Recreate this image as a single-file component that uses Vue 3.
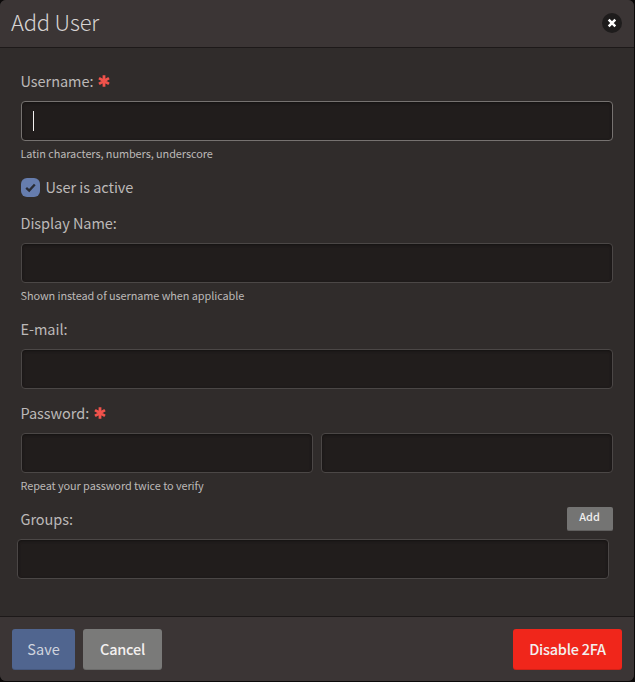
<script setup>
import { ref } from 'vue'

const active = ref(true)
</script>

<template>
  <div class="modal">
    <header class="header">
      <h1>Add User</h1>
      <button class="close" aria-label="Close">
        <svg viewBox="0 0 20 20"><path d="M6.7 6.7 13.3 13.3M13.3 6.7 6.7 13.3" /></svg>
      </button>
    </header>

    <main class="body">
      <div class="label first">
        <span>Username:</span>
        <svg class="star" viewBox="0 0 12 12"><path d="M6 .3V11.7M1 3.1 11 8.9M11 3.1 1 8.9" /></svg>
      </div>
      <div class="input focused"><i class="caret"></i></div>
      <div class="hint">Latin characters, numbers, underscore</div>

      <div class="check" @click="active = !active">
        <span class="box">
          <svg v-if="active" viewBox="0 0 19 19"><path d="M5.2 9.8 8.2 12.6 13.8 6.4" /></svg>
        </span>
        <span>User is active</span>
      </div>

      <div class="label display"><span>Display Name:</span></div>
      <div class="input"></div>
      <div class="hint">Shown instead of username when applicable</div>

      <div class="label email"><span>E-mail:</span></div>
      <div class="input"></div>

      <div class="label password">
        <span>Password:</span>
        <svg class="star" viewBox="0 0 12 12"><path d="M6 .3V11.7M1 3.1 11 8.9M11 3.1 1 8.9" /></svg>
      </div>
      <div class="pair">
        <div class="input"></div>
        <div class="input"></div>
      </div>
      <div class="hint">Repeat your password twice to verify</div>

      <div class="label groups">
        <span>Groups:</span>
        <button class="add">Add</button>
      </div>
      <div class="input shifted"></div>
    </main>

    <footer class="footer">
      <button class="btn save">Save</button>
      <button class="btn cancel">Cancel</button>
      <button class="btn danger">Disable 2FA</button>
    </footer>
  </div>
</template>

<style>
body {
  margin: 0;
  background: #0b0909;
}
</style>

<style scoped>
* {
  box-sizing: border-box;
}
.modal {
  width: 634px;
  height: 681px;
  display: flex;
  flex-direction: column;
  border-radius: 6px;
  overflow: hidden;
  background: #302c2b;
  color: #bcb9b8;
  font: 14.5px/24px "Noto Sans CJK SC", "Noto Sans", sans-serif;
  letter-spacing: -0.05px;
}
.header {
  height: 48px;
  display: flex;
  align-items: center;
  justify-content: space-between;
  padding: 0 12px 1px 11px;
  background: #3b3535;
  border-bottom: 1px solid #1d1919;
}
h1 {
  margin: 0;
  padding-bottom: 5px;
  font-size: 22px;
  line-height: 32px;
  font-weight: 300;
  letter-spacing: -0.2px;
  color: #d6d3d2;
}
button {
  border: 0;
  padding: 0;
  font-family: inherit;
}
.close {
  width: 20px;
  height: 20px;
  border-radius: 50%;
  background: #1e1c1c;
}
svg {
  display: block;
  fill: none;
}
.close svg {
  width: 20px;
  height: 20px;
  stroke: #fff;
  stroke-width: 2.5;
}
.body {
  flex: 1;
  padding: 21px 21px 0;
}
.label {
  height: 24px;
  display: flex;
  align-items: center;
  text-indent: -0.5px;
}
.first {
  margin-bottom: 8px;
}
.star {
  width: 12px;
  height: 12px;
  margin-left: 4.6px;
  stroke: #f0524b;
  stroke-width: 2.8;
}
.input {
  height: 40px;
  border: 1px solid #4b4746;
  border-radius: 4px;
  background: #211d1c;
  box-shadow: inset 0 1px 3px #141111;
}
.focused {
  border-color: #767270;
  padding: 9px 11px;
}
.caret {
  display: block;
  width: 1px;
  height: 20px;
  background: #f2f0ef;
}
.hint {
  height: 26px;
  font-size: 10.9px;
  line-height: 24px;
  letter-spacing: -0.07px;
  text-indent: -0.5px;
}
.check {
  height: 20px;
  margin-top: 10px;
  display: flex;
  align-items: center;
  gap: 5.5px;
}
.box {
  width: 19px;
  height: 19px;
  border-radius: 6px;
  background: #667dae;
}
.box svg {
  width: 19px;
  height: 19px;
  stroke: #292c35;
  stroke-width: 2.3;
}
.display {
  margin: 14px 0 8px;
}
.email {
  margin: 8px 0 8px;
}
.password {
  margin: 12px 0 8px;
}
.pair {
  display: grid;
  grid-template-columns: 1fr 1fr;
  gap: 8px;
}
.groups {
  margin: 8px 0;
  justify-content: space-between;
}
.add {
  width: 46px;
  height: 24px;
  border-radius: 2px;
  background: #747473;
  border-bottom: 1px solid #61605f;
  color: #f1efee;
  font-size: 10.9px;
  line-height: 19px;
  padding-bottom: 4px;
  padding-right: 1px;
  font-weight: 500;
}
.shifted {
  margin: 0 4px 0 -4px;
}
.footer {
  height: 65px;
  display: flex;
  gap: 8px;
  padding: 12px 12px 0;
  background: #3b3535;
  border-top: 1px solid #1d1919;
}
.btn {
  height: 41px;
  padding-bottom: 2px;
  border-radius: 3px;
  font-size: 14.5px;
  line-height: 38px;
  font-weight: 500;
  letter-spacing: -0.25px;
  color: #f3f0ef;
  box-shadow: inset 0 -1px rgba(0, 0, 0, 0.12);
}
.save {
  width: 63px;
  background: #50658f;
  color: #d0d4de;
  font-weight: 400;
  letter-spacing: 0;
}
.cancel {
  width: 79px;
  background: #7a7a79;
}
.danger {
  width: 109px;
  margin-left: auto;
  background: #f0261b;
}
</style>
